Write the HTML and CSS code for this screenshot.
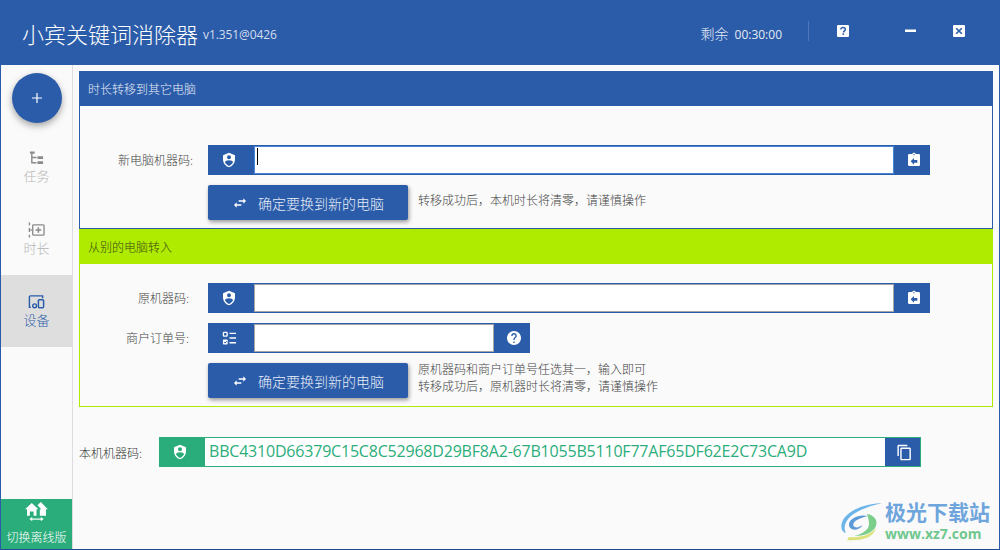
FILE: index.html
```html
<!DOCTYPE html>
<html lang="zh-CN">
<head>
  <meta charset="UTF-8">
  <title>小宾关键词消除器</title>
  <link rel="stylesheet" href="styles.css">
</head>
<body>
  <div class="window">
    <header class="titlebar">
      <h1 class="app-name">小宾关键词消除器</h1>
      <span class="app-version">v1.351@0426</span>
      <span class="time-left"><span class="time-label">剩余</span>00:30:00</span>
      <span class="bar-divider"></span>
      <button class="win-btn btn-help">
        <svg viewBox="0 0 12 12" width="12" height="12"><rect width="12" height="12" rx="1" fill="#fff"/><path d="M3.8 4.6C3.8 3.2 4.8 2.4 6 2.4s2.3.8 2.3 2c0 1.6-1.8 1.5-1.8 3" fill="none" stroke="#2b5ca9" stroke-width="1.5"/><rect x="5.5" y="8.3" width="1.6" height="1.6" fill="#2b5ca9"/></svg>
      </button>
      <button class="win-btn btn-min">
        <svg viewBox="0 0 12 12" width="12" height="12"><rect y="4.5" width="11" height="2.5" fill="#fff"/></svg>
      </button>
      <button class="win-btn btn-close">
        <svg viewBox="0 0 12 12" width="12" height="12"><rect width="12" height="12" rx="1" fill="#fff"/><path d="M3.2 3.2l5.6 5.6M8.8 3.2L3.2 8.8" stroke="#2b5ca9" stroke-width="1.6"/></svg>
      </button>
    </header>

    <div class="main">
      <nav class="sidebar">
        <button class="fab">
          <svg viewBox="0 0 12 12" width="12" height="12"><path d="M6 1v10M1 6h10" stroke="#fff" stroke-width="1.2"/></svg>
        </button>
        <a class="nav-item">
          <svg viewBox="0 0 16 16" width="15" height="16"><path d="M1 1h5v2.4H1zM9 6h6v3H9zM9 11.5h6v3H9z" fill="#8a8a8a"/><path d="M3 3.4V13h5M3 7.500h5" fill="none" stroke="#8a8a8a" stroke-width="1.500"/></svg>
          <span>任务</span>
        </a>
        <a class="nav-item">
          <svg viewBox="0 0 18 16" width="17" height="16"><path d="M1.500 0v3M1.500 6v4M1.500 13v3" stroke="#8a8a8a" stroke-width="1.500"/><path d="M2.500 8H5" stroke="#8a8a8a" stroke-width="1.400"/><rect x="5" y="2.500" width="12" height="11" rx="1" fill="none" stroke="#8a8a8a" stroke-width="1.400"/><path d="M11 5v6M8 8h6" stroke="#8a8a8a" stroke-width="1.600"/></svg>
          <span>时长</span>
        </a>
        <a class="nav-item active">
          <svg viewBox="0 0 18 16" width="17" height="16"><path d="M3 13.500H1.500V2.500a1 1 0 0 1 1-1h13v2.500" fill="none" stroke="#2b5ca9" stroke-width="1.500"/><circle cx="7" cy="12" r="2" fill="none" stroke="#2b5ca9" stroke-width="1.500"/><rect x="11" y="5.500" width="5.500" height="8.500" rx="1" fill="none" stroke="#2b5ca9" stroke-width="1.600"/></svg>
          <span>设备</span>
        </a>
        <a class="offline-btn">
          <svg viewBox="0 0 24 20" width="23" height="19"><path d="M0 7.500L7 1l7 6.500h-2v7H9V10H5v4.500H2v-7z" fill="#fff"/><path d="M13 3.500L16.500 0 24 7.500h-2v7h-6.500V8l1.500-.5z" fill="#fff"/><path d="M6 18h12" stroke="#fff" stroke-width="1.300"/><path d="M4.500 18l3-2.200v4.400zM19.500 18l-3-2.200v4.400z" fill="#fff"/></svg>
          <span>切换离线版</span>
        </a>
      </nav>

      <main class="content">
        <section class="panel panel-blue">
          <h2 class="panel-head">时长转移到其它电脑</h2>
          <div class="panel-body">
            <div class="form-row">
              <label class="row-label">新电脑机器码:</label>
              <div class="field field-wide focused">
                <span class="addon">
                  <svg viewBox="0 0 24 24" width="16" height="16"><path fill="#fff" d="M12,1L3,5V11C3,16.55 6.84,21.74 12,23C17.16,21.74 21,16.55 21,11V5L12,1M12,5A3,3 0 0,1 15,8A3,3 0 0,1 12,11A3,3 0 0,1 9,8A3,3 0 0,1 12,5M17.13,17C15.92,18.85 14.11,20.24 12,20.92C9.89,20.24 8.08,18.85 6.87,17C6.530,16.500 6.240,16 6,15.470C6,13.820 8.710,12.470 12,12.470C15.290,12.470 18,13.790 18,15.470C17.760,16 17.470,16.500 17.130,17Z"/></svg>
                </span>
                <span class="input-box"><input type="text"><span class="caret"></span></span>
                <span class="addon addon-end">
                  <svg viewBox="0 0 24 24" width="16" height="16"><path fill="#fff" d="M19,3H14.820C14.400,1.840 13.300,1 12,1C10.700,1 9.600,1.840 9.180,3H5A2,2 0 0,0 3,5V19A2,2 0 0,0 5,21H19A2,2 0 0,0 21,19V5A2,2 0 0,0 19,3M12,3A1,1 0 0,1 13,4A1,1 0 0,1 12,5A1,1 0 0,1 11,4A1,1 0 0,1 12,3M17,16H12V19L7,14L12,9V12H17V16Z"/></svg>
                </span>
              </div>
            </div>
            <div class="form-row action-row">
              <span class="row-label"></span>
              <button class="primary-btn">
                <svg viewBox="0 0 24 24" width="16" height="16"><path fill="#fff" d="M21,9L17,5V8H10V10H17V13M7,11L3,15L7,19V16H14V14H7V11Z"/></svg>
                确定要换到新的电脑
              </button>
              <p class="hint">转移成功后，本机时长将清零，请谨慎操作</p>
            </div>
          </div>
        </section>

        <section class="panel panel-lime">
          <h2 class="panel-head">从别的电脑转入</h2>
          <div class="panel-body">
            <div class="form-row">
              <label class="row-label">原机器码:</label>
              <div class="field field-wide">
                <span class="addon">
                  <svg viewBox="0 0 24 24" width="16" height="16"><path fill="#fff" d="M12,1L3,5V11C3,16.55 6.84,21.74 12,23C17.16,21.74 21,16.55 21,11V5L12,1M12,5A3,3 0 0,1 15,8A3,3 0 0,1 12,11A3,3 0 0,1 9,8A3,3 0 0,1 12,5M17.13,17C15.92,18.85 14.11,20.24 12,20.92C9.89,20.24 8.08,18.85 6.87,17C6.530,16.500 6.240,16 6,15.470C6,13.820 8.710,12.470 12,12.470C15.290,12.470 18,13.790 18,15.470C17.760,16 17.470,16.500 17.130,17Z"/></svg>
                </span>
                <span class="input-box"><input type="text"></span>
                <span class="addon addon-end">
                  <svg viewBox="0 0 24 24" width="16" height="16"><path fill="#fff" d="M19,3H14.820C14.400,1.840 13.300,1 12,1C10.700,1 9.600,1.840 9.180,3H5A2,2 0 0,0 3,5V19A2,2 0 0,0 5,21H19A2,2 0 0,0 21,19V5A2,2 0 0,0 19,3M12,3A1,1 0 0,1 13,4A1,1 0 0,1 12,5A1,1 0 0,1 11,4A1,1 0 0,1 12,3M17,16H12V19L7,14L12,9V12H17V16Z"/></svg>
                </span>
              </div>
            </div>
            <div class="form-row">
              <label class="row-label">商户订单号:</label>
              <div class="field field-short">
                <span class="addon">
                  <svg viewBox="0 0 16 16" width="15" height="15"><rect x="1.500" y="1.500" width="4" height="4" rx=".8" fill="none" stroke="#fff" stroke-width="1.400"/><rect x="1" y="9" width="5" height="5.500" rx=".8" fill="#fff"/><path d="M2 11.700l1.200 1.200 1.800-2" fill="none" stroke="#2b5ca9"/><path d="M8 2.500h7M8 7.500h7M8 12.500h7" stroke="#fff" stroke-width="1.500"/></svg>
                </span>
                <span class="input-box"><input type="text"></span>
                <span class="addon addon-end">
                  <svg viewBox="2 2 20 20" width="14" height="14"><path fill="#fff" d="M12 2C6.480 2 2 6.480 2 12s4.480 10 10 10 10-4.480 10-10S17.520 2 12 2zm1 17h-2v-2h2v2zm2.070-7.750l-.9.920C13.450 12.900 13 13.500 13 15h-2v-.5c0-1.100.45-2.100 1.170-2.830l1.240-1.260c.37-.36.59-.86.59-1.410 0-1.100-.9-2-2-2s-2 .9-2 2H8c0-2.210 1.790-4 4-4s4 1.790 4 4c0 .88-.36 1.680-.93 2.250z"/></svg>
                </span>
              </div>
            </div>
            <div class="form-row action-row">
              <span class="row-label"></span>
              <button class="primary-btn">
                <svg viewBox="0 0 24 24" width="16" height="16"><path fill="#fff" d="M21,9L17,5V8H10V10H17V13M7,11L3,15L7,19V16H14V14H7V11Z"/></svg>
                确定要换到新的电脑
              </button>
              <p class="hint">原机器码和商户订单号任选其一，输入即可<br>转移成功后，原机器时长将清零，请谨慎操作</p>
            </div>
          </div>
        </section>

        <div class="local-code">
          <label class="local-label">本机机器码:</label>
          <div class="code-field">
            <span class="addon addon-green">
              <svg viewBox="0 0 24 24" width="16" height="16"><path fill="#fff" d="M12,1L3,5V11C3,16.55 6.84,21.74 12,23C17.16,21.74 21,16.55 21,11V5L12,1M12,5A3,3 0 0,1 15,8A3,3 0 0,1 12,11A3,3 0 0,1 9,8A3,3 0 0,1 12,5M17.13,17C15.92,18.85 14.11,20.24 12,20.92C9.89,20.24 8.08,18.85 6.87,17C6.530,16.500 6.240,16 6,15.470C6,13.820 8.710,12.470 12,12.470C15.290,12.470 18,13.790 18,15.470C17.760,16 17.470,16.500 17.130,17Z"/></svg>
            </span>
            <span class="code-text">BBC4310D66379C15C8C52968D29BF8A2-67B1055B5110F77AF65DF62E2C73CA9D</span>
            <span class="addon addon-copy">
              <svg viewBox="0 0 24 24" width="17" height="17"><path fill="#fff" d="M16 1H4c-1.100 0-2 .9-2 2v14h2V3h12V1zm3 4H8c-1.100 0-2 .9-2 2v14c0 1.100.9 2 2 2h11c1.100 0 2-.9 2-2V7c0-1.100-.9-2-2-2zm0 16H8V7h11v14z"/></svg>
            </span>
          </div>
        </div>
      </main>
    </div>

    <div class="watermark">
      <svg viewBox="0 0 44 42" width="44" height="42">
        <path d="M42 2C28 3 10 7 3 19 0 25 1 31 6 32 3 27 5 20 11 15 18 9 30 5 42 2z" fill="#6db5e8"/>
        <path d="M28 15C19 13 10 17 9 23c-.5 4 4 7 9 5 3-1 4-3 4-4-2 2-5 3-7 2-3-1-2-5 2-7 3-2 7-3 11-4z" fill="#5b9ad6"/>
        <path d="M27 13c7 1 11 6 9 12-3 7-12 10-22 10 8-2 15-6 15-12 0-4-1-7-2-10z" fill="#7ccf8a"/>
        <path d="M36 27c-5 7-16 10-27 9-1 1-1 2-2 3 12 1 26-1 29-12z" fill="#dce27a"/>
      </svg>
      <div class="mark-text">
        <span class="mark-cn">极光下载站</span>
        <span class="mark-url">www.xz7.com</span>
      </div>
    </div>
  </div>
</body>
</html>
```

FILE: styles.css
```css
* {
  box-sizing: border-box;
}
body {
  margin: 0;
  font-family: "Noto Sans CJK SC", "Noto Sans", sans-serif;
  font-size: 12px;
  color: #444;
  background: #fafafa;
  overflow: hidden;
}
button {
  font-family: inherit;
  border: none;
  padding: 0;
  cursor: pointer;
}
h1, h2, p {
  margin: 0;
  font-weight: normal;
}
.window {
  position: relative;
  width: 1000px;
  height: 550px;
  display: flex;
  flex-direction: column;
  border: 1px solid #2b5ca9;
  border-top: none;
  border-bottom-color: #1f4a8e;
}

/* title bar */
.titlebar {
  flex: none;
  height: 65px;
  margin: 0 -1px;
  display: flex;
  align-items: center;
  background: #2b5ca9;
  color: #fff;
}
.app-name {
  margin-left: 22px;
  font-size: 22px;
  font-weight: 300;
  line-height: 1;
}
.app-version {
  margin: 4px 0 0 5px;
  font-family: "Open Sans", sans-serif;
  font-weight: 400;
  font-size: 12px;
  letter-spacing: -.1px;
  color: #d3deef;
}
.time-left {
  margin-left: auto;
  font-family: "Open Sans", "Noto Sans CJK SC", sans-serif;
  font-size: 12px;
  font-weight: 400;
  color: #e3eaf5;
}
.time-label {
  margin-right: 6px;
  font-size: 14px;
  font-weight: 300;
  font-family: "Noto Sans CJK SC", sans-serif;
}
.bar-divider {
  width: 1px;
  height: 20px;
  margin: -3px 28px 0 26px;
  background: #4d77b8;
}
.win-btn {
  width: 12px;
  height: 12px;
  margin-top: -3px;
  background: none;
  line-height: 0;
}
.btn-help {
  margin-right: 56px;
}
.btn-min {
  margin-right: 36px;
}
.btn-close {
  margin-right: 35px;
}

/* sidebar */
.main {
  flex: 1;
  display: flex;
  min-height: 0;
}
.sidebar {
  flex: none;
  width: 72px;
  display: flex;
  flex-direction: column;
  align-items: center;
  padding-top: 8px;
  border-right: 1px solid #ddd;
}
.fab {
  flex: none;
  width: 50px;
  height: 50px;
  margin-bottom: 8px;
  border-radius: 50%;
  background: #2b5ca9;
  box-shadow: 0 3px 7px rgba(0, 0, 0, .35);
  line-height: 0;
}
.nav-item {
  width: 100%;
  height: 72px;
  display: flex;
  flex-direction: column;
  align-items: center;
  padding-top: 19px;
  gap: 2px;
  font-size: 13px;
  line-height: 16px;
  font-weight: 300;
  color: #b5b5b5;
}
.nav-item.active {
  background: #dedede;
  color: #2b5ca9;
}
.offline-btn {
  margin-top: auto;
  width: 100%;
  height: 50px;
  display: flex;
  flex-direction: column;
  align-items: center;
  padding-top: 3px;
  gap: 8px;
  background: #2bad7b;
  color: #fff;
  font-size: 12px;
  line-height: 15px;
  font-weight: 300;
}

/* panels */
.content {
  flex: 1;
  min-width: 0;
  padding: 6px 6px 0;
}
.panel {
  border: 1px solid #2b5ca9;
  border-top: none;
}
.panel-head {
  height: 35px;
  margin: 0 -1px;
  padding-left: 9px;
  font-size: 12px;
  line-height: 35px;
  font-weight: 300;
}
.panel-blue .panel-head {
  background: #2b5ca9;
  color: #e6edf7;
}
.panel-blue .panel-body {
  padding-top: 39px;
}
.panel-blue .row-label {
  padding-right: 15px;
}
.panel-lime {
  border-color: #aeeb00;
}
.panel-lime .panel-head {
  background: #aeeb00;
  color: #3d4a14;
}
.panel-lime .panel-body {
  padding-top: 19px;
}
.panel-lime .row-label {
  padding-right: 19px;
}
.panel-body {
  display: flex;
  flex-direction: column;
  gap: 10px;
  padding-bottom: 8px;
}
.form-row {
  display: flex;
  align-items: center;
}
.row-label {
  flex: none;
  width: 128px;
  margin-top: -2px;
  text-align: right;
  font-weight: 300;
}

/* input groups */
.field {
  height: 30px;
  display: flex;
  background: #2b5ca9;
}
.field-wide {
  width: 722px;
}
.field-short {
  width: 322px;
}
.addon {
  flex: none;
  width: 46px;
  padding-right: 4px;
  display: flex;
  align-items: center;
  justify-content: center;
}
.addon-end {
  width: 36px;
  padding: 0 0 0 4px;
}
.input-box {
  position: relative;
  flex: 1;
  display: flex;
  padding: 1px 0;
}
.input-box input {
  width: 100%;
  padding: 0;
  border: 1px solid #a5a5a5;
  border-radius: 0;
  outline: none;
  background: #fff;
}
.focused .input-box input {
  border-color: #4a86d8;
}
.caret {
  position: absolute;
  left: 3px;
  top: 3px;
  width: 1px;
  height: 17px;
  background: #000;
}
.action-row {
  height: 35px;
}
.primary-btn {
  flex: none;
  width: 200px;
  height: 35px;
  display: flex;
  align-items: center;
  gap: 10px;
  padding-left: 24px;
  border-radius: 2px;
  background: #2b5ca9;
  color: #e8eef8;
  font-size: 14px;
  font-weight: 300;
  box-shadow: 1px 2px 4px rgba(0, 0, 0, .4);
}
.hint {
  margin: 0 0 7px 10px;
  font-size: 12px;
  line-height: 17px;
  font-weight: 300;
}

/* machine code */
.local-code {
  display: flex;
  align-items: center;
  margin-top: 30px;
}
.local-label {
  flex: none;
  width: 80px;
  font-weight: 300;
  color: #333;
}
.code-field {
  width: 762px;
  height: 30px;
  display: flex;
  border: 1px solid #2bad7b;
  background: #fff;
}
.addon-green {
  margin: -1px 0 -1px -1px;
  background: #2bad7b;
}
.code-text {
  flex: 1;
  padding-left: 4px;
  font-family: "Open Sans", sans-serif;
  font-size: 16px;
  letter-spacing: -.2px;
  line-height: 27px;
  color: #2bad7b;
  white-space: nowrap;
}
.addon-copy {
  width: 35px;
  padding: 0 0 0 3px;
  background: #2b5ca9;
}

/* watermark sits over the page corner */
.watermark {
  position: absolute;
  right: 9px;
  bottom: 6px;
  display: flex;
  align-items: center;
  gap: 1px;
}
.mark-text {
  display: flex;
  flex-direction: column;
  margin-top: -4px;
}
.mark-cn {
  font-size: 21px;
  font-weight: 700;
  line-height: 24px;
  color: #6ea5dc;
}
.mark-url {
  margin-top: 3px;
  font-family: "Open Sans", sans-serif;
  font-size: 14px;
  font-weight: 700;
  line-height: 16px;
  color: #6fc78e;
}
```
